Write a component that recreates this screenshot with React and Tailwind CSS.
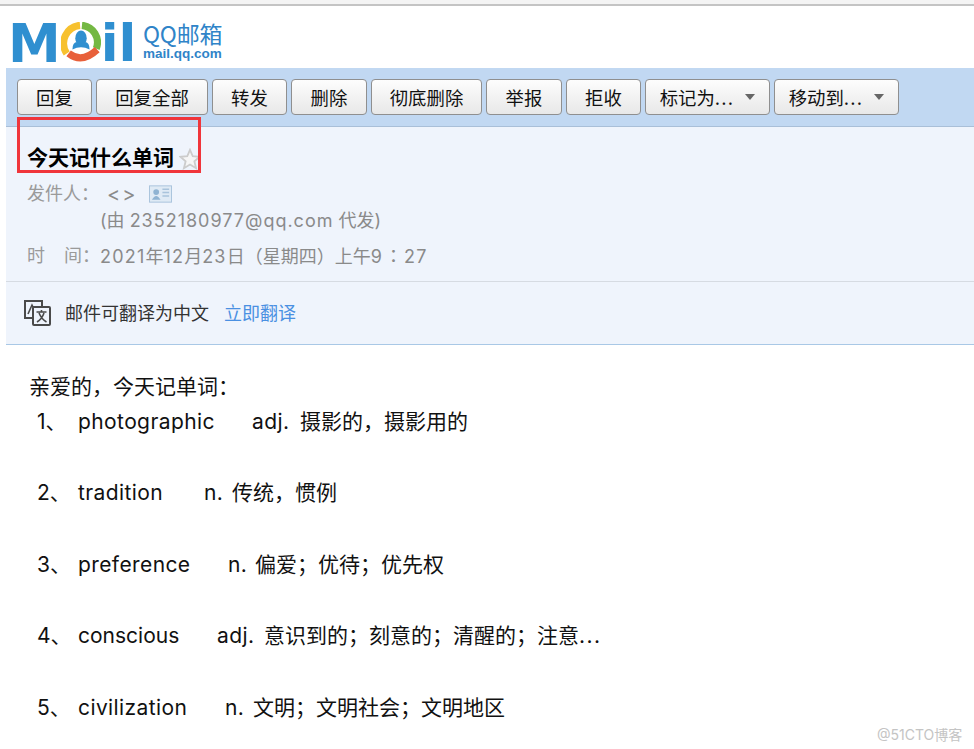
const mixed = { fontFamily: 'Inter, "Noto Sans CJK SC", sans-serif' };
const cjk = { fontFamily: '"Noto Sans CJK SC", sans-serif' };
const dv = { fontFamily: '"DejaVu Sans", sans-serif' };

function Btn({ w, children, caret }) {
  return (
    <button
      className={`h-[36px] shrink-0 rounded-[4px] border border-[#8f8f8f] bg-gradient-to-b from-[#fdfdfd] to-[#e8e8e8] flex items-center justify-center text-[18.4px] text-[#111] pt-[3px] ${w}`}
    >
      <span>{children}</span>
      {caret && <span className="tracking-[1.2px]">...</span>}
      {caret && <span className="ml-[11px] -mt-[3px] w-0 h-0 border-x-[5.5px] border-x-transparent border-t-[6px] border-t-[#666]" />}
    </button>
  );
}

function Logo() {
  return (
    <div className="h-[62px] pl-[8px] flex items-start">
      <div className="flex items-center h-[46px] w-[128px] mt-[14px]">
        <span className="w-[57px] text-[53px] leading-none font-bold text-[#2f8fd0]" style={dv}>M</span>
        <svg width="40" height="40" viewBox="0 0 42 42" className="shrink-0 -mt-[3px]">
          <path d="M6 33 A19 19 0 0 1 20 3.5" fill="none" stroke="#f7c12f" strokeWidth="7.5" />
          <path d="M22 3.5 A18 18 0 0 1 37 28" fill="none" stroke="#74b843" strokeWidth="7.5" />
          <path d="M8 33 Q22 44 38 29" fill="none" stroke="#e8603a" strokeWidth="7.5" />
          <ellipse cx="21" cy="17" rx="6" ry="8" fill="#2f8fd0" />
          <path d="M12 29 Q12 21 17 21 L25 21 Q30 21 30 29 Q21 24 12 29Z" fill="#2f8fd0" />
        </svg>
        <span className="text-[52px] leading-none font-bold text-[#2f8fd0]" style={dv}>il</span>
      </div>
      <div className="ml-[7px] mt-[15px] flex flex-col text-[#2f84c8]">
        <span className="text-[23px] leading-[25px] tracking-[-0.2px]" style={cjk}>QQ邮箱</span>
        <span className="text-[13.5px] leading-[16px] font-bold" style={{ fontFamily: '"Liberation Sans", sans-serif' }}>mail.qq.com</span>
      </div>
    </div>
  );
}

function Line({ n, word, w, abbr, aw, cn, tail }) {
  return (
    <div className="h-[35.7px] flex items-center whitespace-pre pl-[37px]">
      {n && <span className="w-[41px]">{n}、</span>}
      {word && <span className={w}>{word}</span>}
      {abbr && <span className={`tracking-[0.4px] ${aw}`}>{abbr}</span>}
      {cn && <span>{cn}</span>}
      {tail && <span className="tracking-[1.4px]">{tail}</span>}
    </div>
  );
}

const D = ({ children }) => <span className="tracking-[1.2px]">{children}</span>;

export default function App() {
  return (
    <div className="relative w-[974px] h-[749px] overflow-hidden bg-white" style={mixed}>
      <div className="h-[6px] bg-[#f4f4f4] border-b-2 border-[#c4c4c4]" />
      <Logo />
      <div className="ml-[6px]">
        <div className="h-[59px] bg-[#c1d8f2] border-b border-[#a9bfd8] pt-[11px] pl-[11px] flex gap-[4px]">
          <Btn w="w-[75px]">回复</Btn>
          <Btn w="w-[112px]">回复全部</Btn>
          <Btn w="w-[75px]">转发</Btn>
          <Btn w="w-[76px]">删除</Btn>
          <Btn w="w-[111px]">彻底删除</Btn>
          <Btn w="w-[76px]">举报</Btn>
          <Btn w="w-[75px]">拒收</Btn>
          <Btn w="w-[125px]" caret>标记为</Btn>
          <Btn w="w-[125px]" caret>移动到</Btn>
        </div>
        <div className="h-[155px] bg-[#eff4fc] border-b border-[#d6dbe2] pl-[21px] pt-[17px]">
          <div className="flex items-center h-[28px]">
            <span className="text-[21px] font-bold text-black">今天记什么单词</span>
            <svg width="22" height="22" viewBox="0 0 24 24" className="ml-[5px] mt-[1px]">
              <path d="M12 2 L15 9 L22.5 9.6 L16.8 14.6 L18.6 22 L12 18 L5.4 22 L7.2 14.6 L1.5 9.6 L9 9Z" fill="#f6f6f6" stroke="#cccccc" strokeWidth="2" />
            </svg>
          </div>
          <div className="flex items-center h-[27px] mt-[8px] text-[18px] text-[#9a9a9a]">
            <span className="w-[80px]">发件人：</span>
            <span className="text-[20px] text-[#8a8a8a] tracking-[2px]">&lt;&gt;</span>
            <svg width="23" height="18" viewBox="0 0 24 18" className="ml-[12px]">
              <rect x="0.5" y="0.5" width="23" height="17" fill="#dfeaf5" stroke="#a9c3dc" />
              <circle cx="7.5" cy="7" r="3" fill="#8fb3d3" />
              <path d="M3 15 Q7.5 7 12 15Z" fill="#8fb3d3" />
              <path d="M14 4h7M14 7.5h7M14 11h7" stroke="#a9c3dc" strokeWidth="1.5" />
            </svg>
          </div>
          <div className="h-[27px] pl-[73px] flex items-center text-[18px] text-[#8a8a8a] whitespace-pre">
            (由 <span className="tracking-[1px]">2352180977@qq.com</span> 代发)
          </div>
          <div className="flex items-center h-[27px] mt-[8px] text-[18px] text-[#8a8a8a]">
            <span className="w-[37px] text-[#9a9a9a]">时</span>
            <span className="w-[36px] text-[#9a9a9a] whitespace-pre">间：</span>
            <span><D>2021</D>年<D>12</D>月<D>23</D>日（星期四）上午<D>9</D><span className="mx-[1.5px] font-['Noto_Sans_CJK_TC']">：</span><D>27</D></span>
          </div>
        </div>
        <div className="h-[63px] bg-[#eff4fc] border-b border-[#a9c8e6] pl-[18px] flex items-center text-[18px] text-[#333]">
          <svg width="27" height="27" viewBox="0 0 27 27" fill="none" stroke="#4a4a4a" strokeWidth="2">
            <path d="M1 1h17v6H10v11H1z" fill="#eff4fc" />
            <path d="M4 14 L8 5 L10 9" strokeWidth="1.6" />
            <rect x="9" y="7" width="17" height="18" rx="1" fill="#eff4fc" />
            <path d="M12.5 12h10M17.5 10v2M15 13q2.5 6 7.5 9M20 13q-2 6-7 9" strokeWidth="1.6" />
          </svg>
          <span className="ml-[14px]">邮件可翻译为中文</span>
          <span className="ml-[15px] text-[#4a90e2]">立即翻译</span>
        </div>
        <div className="pt-[25px] text-[21px] text-[#111] -ml-[6px]">
          <div className="h-[34px] flex items-center pl-[29px]">亲爱的，今天记单词：</div>
          <Line n="1" word="photographic" w="tracking-[0.4px] w-[174px]" abbr="adj." aw="w-[48px]" cn="摄影的，摄影用的" />
          <Line />
          <Line n="2" word="tradition" w="tracking-[0.4px] w-[126px]" abbr="n." aw="w-[28px]" cn="传统，惯例" />
          <Line />
          <Line n="3" word="preference" w="tracking-[0.4px] w-[150px]" abbr="n." aw="w-[27px]" cn="偏爱；优待；优先权" />
          <Line />
          <Line n="4" word="conscious" w="w-[139px]" abbr="adj." aw="w-[47px]" cn="意识到的；刻意的；清醒的；注意" tail="..." />
          <Line />
          <Line n="5" word="civilization" w="tracking-[0.4px] w-[147px]" abbr="n." aw="w-[28px]" cn="文明；文明社会；文明地区" />
        </div>
      </div>
      <div className="absolute left-[17px] top-[117px] w-[184px] h-[56px] border-[3px] border-[#f0353b]" />
      <div className="absolute left-[877px] top-[724px] text-[14px] text-[#c4c4c4]">@51CTO博客</div>
    </div>
  );
}
